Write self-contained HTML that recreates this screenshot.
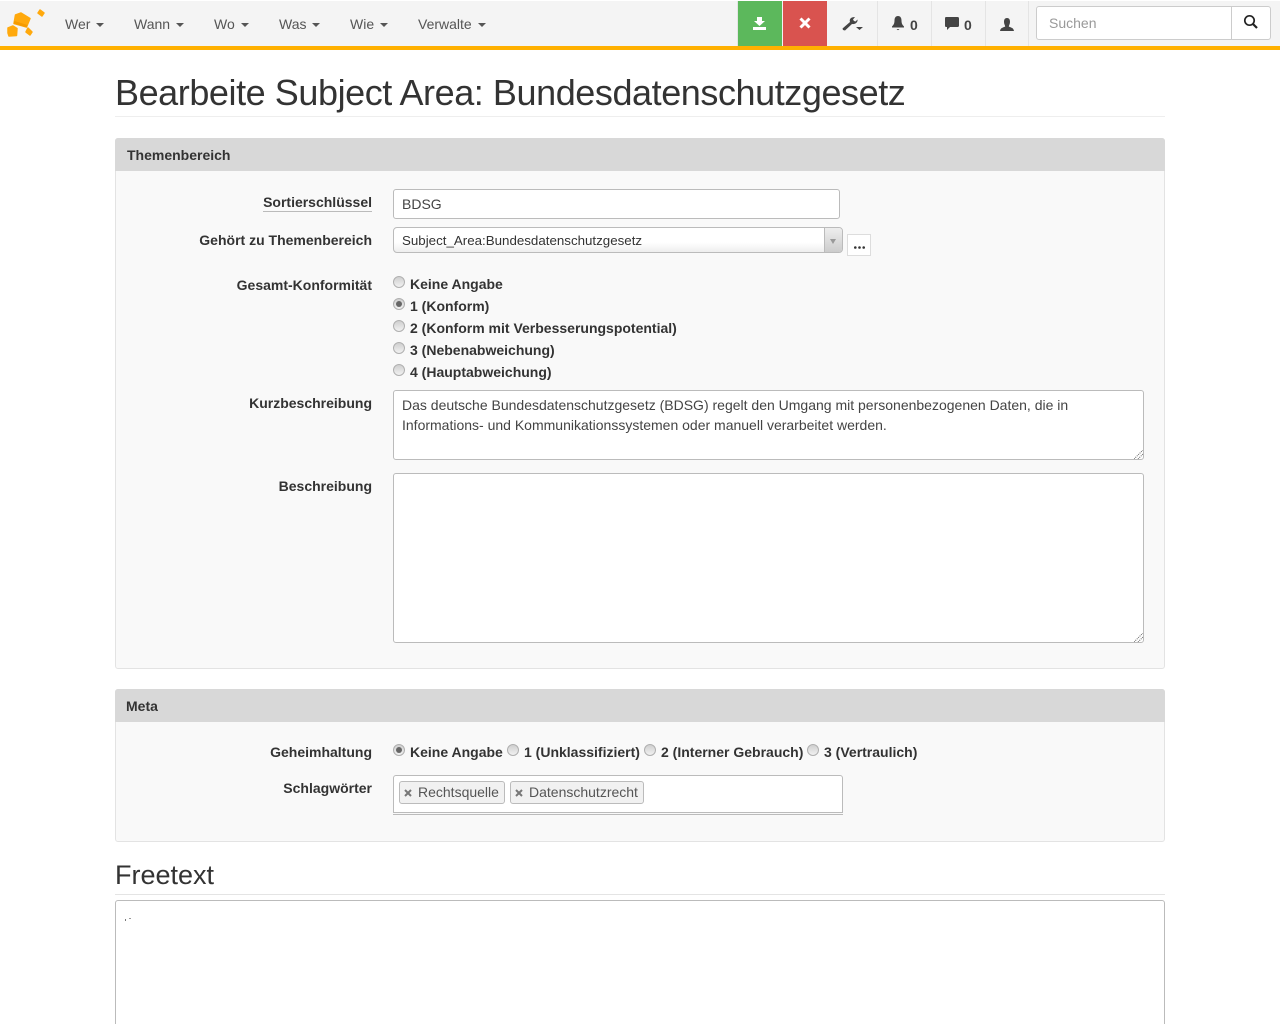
<!DOCTYPE html>
<html><head><meta charset="utf-8"><title>Bearbeite Subject Area</title>
<style>
html,body{margin:0;padding:0;background:#fff;width:1280px;height:1024px;overflow:hidden}
body{position:relative;font-family:"Liberation Sans",sans-serif;font-size:14px;color:#333}
#w{position:absolute;left:0;top:0;width:1280px;height:1024px;overflow:hidden}
.a{position:absolute;white-space:nowrap}
.nav{left:0;top:1px;width:1280px;height:45px;background:#f4f4f4}
.bar{left:0;top:46px;width:1280px;height:4px;background:#ffb000}
.m{top:16px;font-size:14px;line-height:16px;color:#555}
.c{position:absolute;width:0;height:0;border-left:4px solid transparent;border-right:4px solid transparent;border-top:4px solid #555}
.sep{top:1px;width:1px;height:45px;background:#e4e4e4}
.n{font-weight:bold;font-size:14px;color:#444;line-height:16px}
.panel{left:115px;width:1048px;background:#f9f9f9;border:1px solid #e3e3e3;border-radius:3px}
.ph{left:115px;width:1050px;height:33px;background:#d8d8d8;border-radius:3px 3px 0 0;font-weight:bold;font-size:14px;line-height:34px;color:#333}
.l{width:260px;left:112px;text-align:right;font-weight:bold;font-size:14px;line-height:16px;color:#333}
.box{background:#fff;border:1px solid #bbb;border-radius:3px;box-sizing:border-box}
.r{font-weight:bold;font-size:14px;line-height:16px;color:#333}
.o{position:absolute;width:12px;height:12px;box-sizing:border-box;border:1px solid #b0b0b0;border-radius:50%;background:linear-gradient(#cfcfcf,#f2f2f2)}
.o.on::after{content:"";position:absolute;left:2px;top:2px;width:6px;height:6px;border-radius:50%;background:#666}
.tag{top:781px;height:23px;box-sizing:border-box;border:1px solid #bbb;border-radius:3px;background:#f1f1f1;line-height:21px;color:#555;font-size:14px}
.tag svg{position:absolute;left:4px;top:7px}
</style></head><body><div id="w">
<div class="a nav"></div><div class="a bar"></div>

<svg class="a" style="left:0;top:0" width="50" height="42" viewBox="0 0 50 42">
<g fill="#ffa90d" stroke="#ffa90d" stroke-width="1.500" stroke-linejoin="round">
<path d="M15.500 15 21 13 30 18.500 26.500 27 14 23.500Z"/>
<path d="M8 28 13 26 17 28.500 16.500 35.500 9 36 8 33Z"/>
<path d="M28 28 32 32 30 35 26 32Z"/>
<path d="M40 10 44 13 42 16 38 13Z"/>
</g>
<path fill="#f59b00" d="M13.500 23.500 26.500 27.500 27.500 25 14.500 21Z"/>
</svg>

<div class="a m" style="left:65px">Wer</div><div class="c" style="left:96px;top:23px"></div>
<div class="a m" style="left:134px">Wann</div><div class="c" style="left:176px;top:23px"></div>
<div class="a m" style="left:214px">Wo</div><div class="c" style="left:241px;top:23px"></div>
<div class="a m" style="left:279px">Was</div><div class="c" style="left:312px;top:23px"></div>
<div class="a m" style="left:350px">Wie</div><div class="c" style="left:380px;top:23px"></div>
<div class="a m" style="left:418px">Verwalte</div><div class="c" style="left:478px;top:23px"></div>

<div class="a sep" style="left:737px"></div>
<div class="a" style="left:738px;top:1px;width:44px;height:45px;background:#5cb85c"></div>
<svg class="a" style="left:752px;top:16px" width="16" height="15" viewBox="0 0 16 15"><path fill="#fff" d="M5 1H10V5H13L7.500 10 2 5H5ZM1 11H14V14H1Z"/></svg>
<div class="a" style="left:783px;top:1px;width:44px;height:45px;background:#d9534f"></div>
<svg class="a" style="left:799px;top:17px" width="12" height="12" viewBox="0 0 12 12"><path stroke="#fff" stroke-width="3" d="M1.500 1.500 10.500 10.500M10.500 1.500 1.500 10.500"/></svg>

<svg class="a" style="left:842px;top:14px" width="24" height="18" viewBox="0 0 24 18"><path fill="#444" d="M8 8C7 5 9 3 13 3L11 5.500 12 7 13.500 7.500 15.500 5.500C16 8.500 13 10.500 10 10L3 16.500 1 16 .5 14.500Z"/><path fill="#444" d="M14 13H21L17.500 16Z"/></svg>
<div class="a sep" style="left:877px"></div>
<svg class="a" style="left:891px;top:15px" width="14" height="16" viewBox="0 0 14 16"><path fill="#444" d="M7 1C9.500 1 10.500 3 10.500 5.500 10.500 8.500 11.500 10 13 11.500V12.500H1V11.500C2.500 10 3.500 8.500 3.500 5.500 3.500 3 4.500 1 7 1ZM5.500 14H8.500L7 15.200Z"/></svg>
<div class="a n" style="left:910px;top:17px">0</div>
<div class="a sep" style="left:931px"></div>
<svg class="a" style="left:944px;top:16px" width="16" height="15" viewBox="0 0 16 15"><path fill="#444" d="M2 1H13.500Q15 1 15 2.500V9.500Q15 11 13.500 11H6L3 14V11H2Q1 11 1 9.500V2.500Q1 1 2 1Z"/></svg>
<div class="a n" style="left:964px;top:17px">0</div>
<div class="a sep" style="left:985px"></div>
<svg class="a" style="left:999px;top:17px" width="16" height="15" viewBox="0 0 16 15"><path fill="#444" d="M8 1C10.500 1 11 3 11 5 11 7 10 8 9.800 9.500 11.500 10.500 14.500 10.500 15 14H1C1.500 10.500 4.500 10.500 6.200 9.500 6 8 5 7 5 5 5 3 5.500 1 8 1Z"/></svg>
<div class="a sep" style="left:1028px"></div>

<div class="a box" style="left:1036px;top:6px;width:235px;height:34px;border-color:#ccc"></div>
<div class="a" style="left:1231px;top:7px;width:1px;height:32px;background:#ccc"></div>
<div class="a" style="left:1049px;top:15px;line-height:16px;color:#999">Suchen</div>
<svg class="a" style="left:1243px;top:14px" width="16" height="16" viewBox="0 0 16 16"><circle cx="6.500" cy="6.500" r="4.700" fill="none" stroke="#222" stroke-width="1.700"/><path stroke="#222" stroke-width="2.200" d="M10 10 14 14"/></svg>

<div class="a" style="left:115px;top:73px;font-size:36px;line-height:40px;color:#333;letter-spacing:-.43px">Bearbeite Subject Area: Bundesdatenschutzgesetz</div>
<div class="a" style="left:115px;top:116px;width:1050px;height:1px;background:#eee"></div>

<div class="a panel" style="top:138px;height:529px"></div>
<div class="a ph" style="top:138px;padding-left:12px;width:1038px">Themenbereich</div>

<div class="a l" style="top:194px">Sortierschlüssel</div>
<div class="a" style="left:263px;top:211px;width:109px;height:1px;background:#bbb"></div>
<div class="a box" style="left:393px;top:189px;width:447px;height:30px"></div>
<div class="a" style="left:402px;top:196px;line-height:16px;color:#444">BDSG</div>

<div class="a l" style="top:232px">Gehört zu Themenbereich</div>
<div class="a box" style="left:393px;top:227px;width:450px;height:26px;background:linear-gradient(#fff 60%,#eee);border-radius:4px"></div>
<div class="a" style="left:824px;top:228px;width:18px;height:24px;box-sizing:border-box;border-left:1px solid #bbb;background:linear-gradient(#eee,#ccc);border-radius:0 3px 3px 0"></div>
<div class="c" style="left:830px;top:239px;border-left-width:3px;border-right-width:3px;border-top:5px solid #999"></div>
<div class="a" style="left:402px;top:233px;line-height:16px;font-size:13.330px;color:#333">Subject_Area:Bundesdatenschutzgesetz</div>
<div class="a" style="left:847px;top:234px;width:24px;height:22px;box-sizing:border-box;background:#fff;border:1px solid #ddd"></div>
<svg class="a" style="left:854px;top:246px" width="12" height="3"><g fill="#333"><circle cx="1.300" cy="1.500" r="1.300"/><circle cx="5.500" cy="1.500" r="1.300"/><circle cx="9.700" cy="1.500" r="1.300"/></g></svg>

<div class="a l" style="top:277px">Gesamt-Konformität</div>
<div class="o" style="left:393px;top:276px"></div><div class="a r" style="left:410px;top:276px">Keine Angabe</div>
<div class="o on" style="left:393px;top:298px"></div><div class="a r" style="left:410px;top:298px">1 (Konform)</div>
<div class="o" style="left:393px;top:320px"></div><div class="a r" style="left:410px;top:320px">2 (Konform mit Verbesserungspotential)</div>
<div class="o" style="left:393px;top:342px"></div><div class="a r" style="left:410px;top:342px">3 (Nebenabweichung)</div>
<div class="o" style="left:393px;top:364px"></div><div class="a r" style="left:410px;top:364px">4 (Hauptabweichung)</div>

<div class="a l" style="top:395px">Kurzbeschreibung</div>
<div class="a box" style="left:393px;top:390px;width:751px;height:70px"></div>
<div class="a" style="left:402px;top:395px;line-height:20px;color:#444">Das deutsche Bundesdatenschutzgesetz (BDSG) regelt den Umgang mit personenbezogenen Daten, die in<br>Informations- und Kommunikationssystemen oder manuell verarbeitet werden.</div>
<svg class="a" style="left:1134px;top:450px" width="9" height="9"><path stroke="#666" stroke-dasharray="1 1" d="M0 9 9 0M4 9 9 4"/></svg>

<div class="a l" style="top:478px">Beschreibung</div>
<div class="a box" style="left:393px;top:473px;width:751px;height:170px"></div>
<svg class="a" style="left:1134px;top:633px" width="9" height="9"><path stroke="#666" stroke-dasharray="1 1" d="M0 9 9 0M4 9 9 4"/></svg>

<div class="a panel" style="top:689px;height:151px"></div>
<div class="a ph" style="top:689px;padding-left:11px;width:1039px">Meta</div>

<div class="a l" style="top:744px">Geheimhaltung</div>
<div class="o on" style="left:393px;top:744px"></div><div class="a r" style="left:410px;top:744px">Keine Angabe</div>
<div class="o" style="left:507px;top:744px"></div><div class="a r" style="left:524px;top:744px">1 (Unklassifiziert)</div>
<div class="o" style="left:644px;top:744px"></div><div class="a r" style="left:661px;top:744px">2 (Interner Gebrauch)</div>
<div class="o" style="left:807px;top:744px"></div><div class="a r" style="left:824px;top:744px">3 (Vertraulich)</div>

<div class="a l" style="top:780px">Schlagwörter</div>
<div class="a box" style="left:393px;top:775px;width:450px;height:38px;border-radius:3px 3px 0 0"></div>
<div class="a" style="left:393px;top:814px;width:450px;height:1px;background:#bbb"></div>
<div class="a tag" style="left:399px;width:106px;padding-left:18px"><svg width="8" height="8"><path stroke="#777" stroke-width="2" d="M1 1 7 7M7 1 1 7"/></svg>Rechtsquelle</div>
<div class="a tag" style="left:510px;width:134px;padding-left:18px"><svg width="8" height="8"><path stroke="#777" stroke-width="2" d="M1 1 7 7M7 1 1 7"/></svg>Datenschutzrecht</div>

<div class="a" style="left:115px;top:859px;font-size:27px;line-height:32px;color:#333">Freetext</div>
<div class="a" style="left:115px;top:894px;width:1050px;height:1px;background:#e4e4e4"></div>
<div class="a box" style="left:115px;top:900px;width:1050px;height:140px"></div>
<div class="a" style="left:125px;top:919px;width:1px;height:2px;background:#777"></div>
<div class="a" style="left:129px;top:918px;width:2px;height:1px;background:#999"></div>
</div></body></html>
